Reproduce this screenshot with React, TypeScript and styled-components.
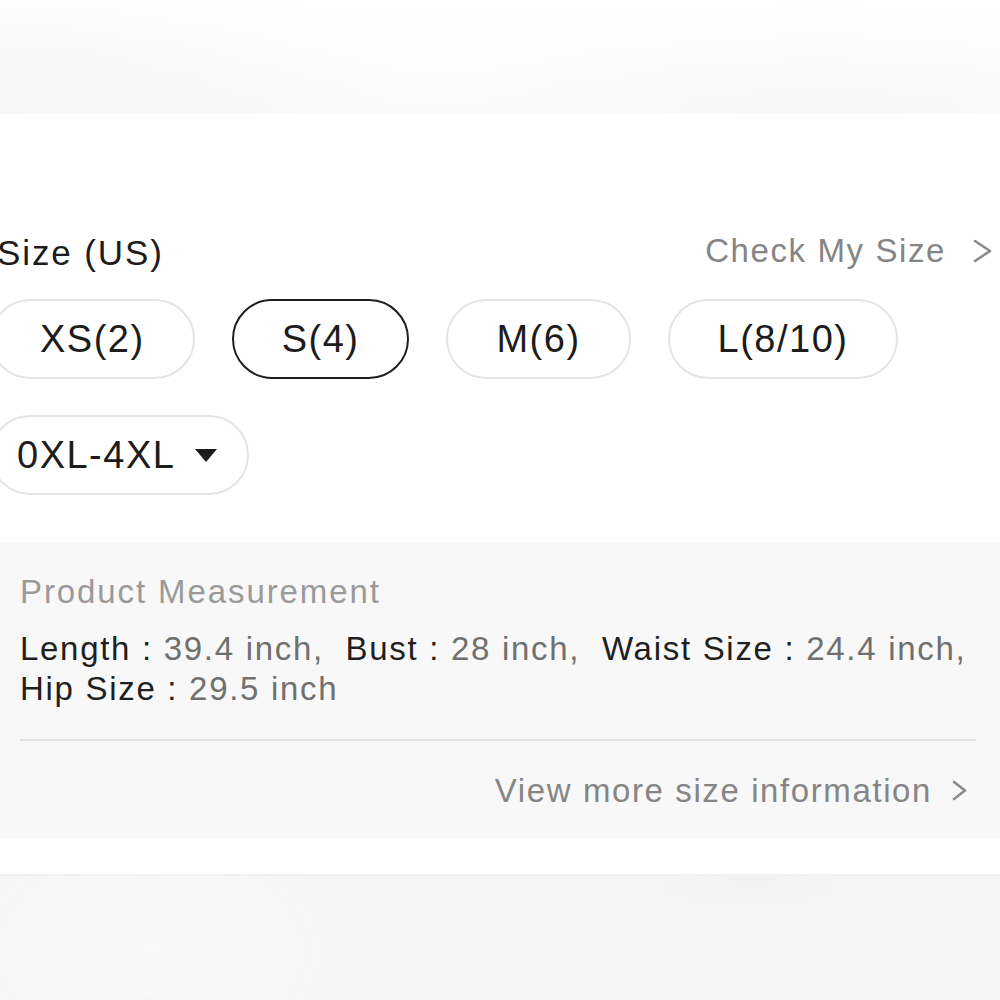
import styled, { createGlobalStyle } from "styled-components";

const GlobalStyle = createGlobalStyle`
    html, body {
        margin: 0;
        padding: 0;
        background: #ffffff;
        overflow: hidden;
    }

    body {
        font-family: "Liberation Sans", Arial, sans-serif;
        color: #1c1c1c;
    }
`;

const Page = styled.div`
    width: 1000px;
    height: 1000px;
    display: flex;
    flex-direction: column;
    background: #ffffff;
`;

const TopBand = styled.div`
    height: 114px;
    flex-shrink: 0;
    background:
        radial-gradient(ellipse 420px 160px at 0% 100%, #f6f6f6 0%, rgba(246, 246, 246, 0) 100%),
        radial-gradient(ellipse 380px 110px at 82% 100%, #f8f8f8 0%, rgba(248, 248, 248, 0) 100%),
        linear-gradient(to bottom, #ffffff 0%, #fafafa 100%);
`;

const SizeSection = styled.section`
    margin-left: -10px;
    padding: 119px 8px 47px 0;
`;

const Header = styled.div`
    display: flex;
    justify-content: space-between;
    align-items: flex-start;
`;

const Title = styled.h2`
    margin: 0;
    padding-left: 7px;
    font-size: 35px;
    line-height: 40px;
    font-weight: 400;
    letter-spacing: 1.9px;
    color: #1c1c1c;
`;

const CheckLink = styled.a`
    display: flex;
    align-items: center;
    gap: 27px;
    font-size: 33px;
    line-height: 36px;
    letter-spacing: 1.6px;
    color: #858585;
    cursor: pointer;
`;

const ChipGrid = styled.div`
    display: flex;
    flex-wrap: wrap;
    gap: 36px 37px;
    margin-top: 26px;
`;

const Chip = styled.button<{ $selected?: boolean }>`
    box-sizing: border-box;
    height: 80px;
    display: inline-flex;
    align-items: center;
    justify-content: center;
    padding: 0 48px;
    border-radius: 40px;
    border: ${(p) => (p.$selected ? "2.5px solid #1e1e1e" : "2px solid #e4e4e4")};
    background: #ffffff;
    font-family: "Liberation Sans", Arial, sans-serif;
    font-size: 38px;
    letter-spacing: 1.5px;
    color: #1c1c1c;
    cursor: pointer;
`;

const DropChip = styled(Chip)`
    padding: 0 30px 0 25px;
    gap: 20px;
`;

const MeasurePanel = styled.div`
    background: #f8f8f8;
    padding: 30px 24px 27px 20px;
`;

const PanelTitle = styled.div`
    font-size: 33px;
    line-height: 40px;
    letter-spacing: 1.9px;
    color: #9a9a9a;
`;

const MeasureText = styled.p`
    margin: 17px 0 0;
    font-size: 33px;
    line-height: 40px;
    letter-spacing: 1.7px;
    white-space: pre-wrap;
`;

const Item = styled.span`
    white-space: pre;
`;

const Label = styled.span`
    color: #1f1f1f;
`;

const Value = styled.span`
    color: #707070;
`;

const Divider = styled.hr`
    margin: 30px 0 0;
    border: none;
    height: 1.5px;
    background: #e2e2e2;
`;

const MoreLink = styled.a`
    margin-top: 30px;
    display: flex;
    justify-content: flex-end;
    align-items: center;
    gap: 20px;
    padding-right: 9px;
    font-size: 33px;
    line-height: 40px;
    letter-spacing: 1.6px;
    color: #858585;
    cursor: pointer;
`;

const Gap = styled.div`
    height: 36px;
    flex-shrink: 0;
    background: #ffffff;
`;

const BottomBand = styled.div`
    flex: 1;
    background:
        radial-gradient(ellipse 120px 40px at 75% 0%, #f2f2f2 0%, rgba(242, 242, 242, 0) 100%),
        radial-gradient(ellipse 200px 130px at 15% 60%, #f9f9f9 0%, rgba(249, 249, 249, 0) 100%),
        #f5f5f5;
    border-top: 2px solid #f2f2f2;
`;

const Chevron = ({ w, h }: { w: number; h: number }) => (
    <svg width={w} height={h} viewBox={`0 0 ${w} ${h}`} fill="none">
        <path
            d={`M2 2 L${w - 2} ${h / 2} L2 ${h - 2}`}
            stroke="#8a8a8a"
            strokeWidth="2.6"
            strokeLinecap="round"
            strokeLinejoin="round"
        />
    </svg>
);

const Caret = () => (
    <svg width="22" height="13" viewBox="0 0 22 13">
        <polygon points="0,0 22,0 11,13" fill="#1c1c1c" />
    </svg>
);

const sizes = [
    { label: "XS(2)", selected: false },
    { label: "S(4)", selected: true },
    { label: "M(6)", selected: false },
    { label: "L(8/10)", selected: false },
];

const measurements = [
    { label: "Length : ", value: "39.4 inch," },
    { label: "Bust : ", value: "28 inch," },
    { label: "Waist Size : ", value: "24.4 inch," },
    { label: "Hip Size : ", value: "29.5 inch" },
];

const App = (): JSX.Element => {
    return (
        <Page>
            <GlobalStyle />
            <TopBand />
            <SizeSection>
                <Header>
                    <Title>Size (US)</Title>
                    <CheckLink>
                        Check My Size
                        <Chevron w={19} h={24} />
                    </CheckLink>
                </Header>
                <ChipGrid>
                    {sizes.map((s) => (
                        <Chip key={s.label} $selected={s.selected}>
                            {s.label}
                        </Chip>
                    ))}
                    <DropChip>
                        0XL-4XL
                        <Caret />
                    </DropChip>
                </ChipGrid>
            </SizeSection>
            <MeasurePanel>
                <PanelTitle>Product Measurement</PanelTitle>
                <MeasureText>
                    {measurements.map((m, i) => (
                        <span key={m.label}>
                            <Item>
                                <Label>{m.label}</Label>
                                <Value>{m.value}</Value>
                            </Item>
                            {i < measurements.length - 1 ? "  " : ""}
                        </span>
                    ))}
                </MeasureText>
                <Divider />
                <MoreLink>
                    View more size information
                    <Chevron w={15} h={21} />
                </MoreLink>
            </MeasurePanel>
            <Gap />
            <BottomBand />
        </Page>
    );
};

export default App;
